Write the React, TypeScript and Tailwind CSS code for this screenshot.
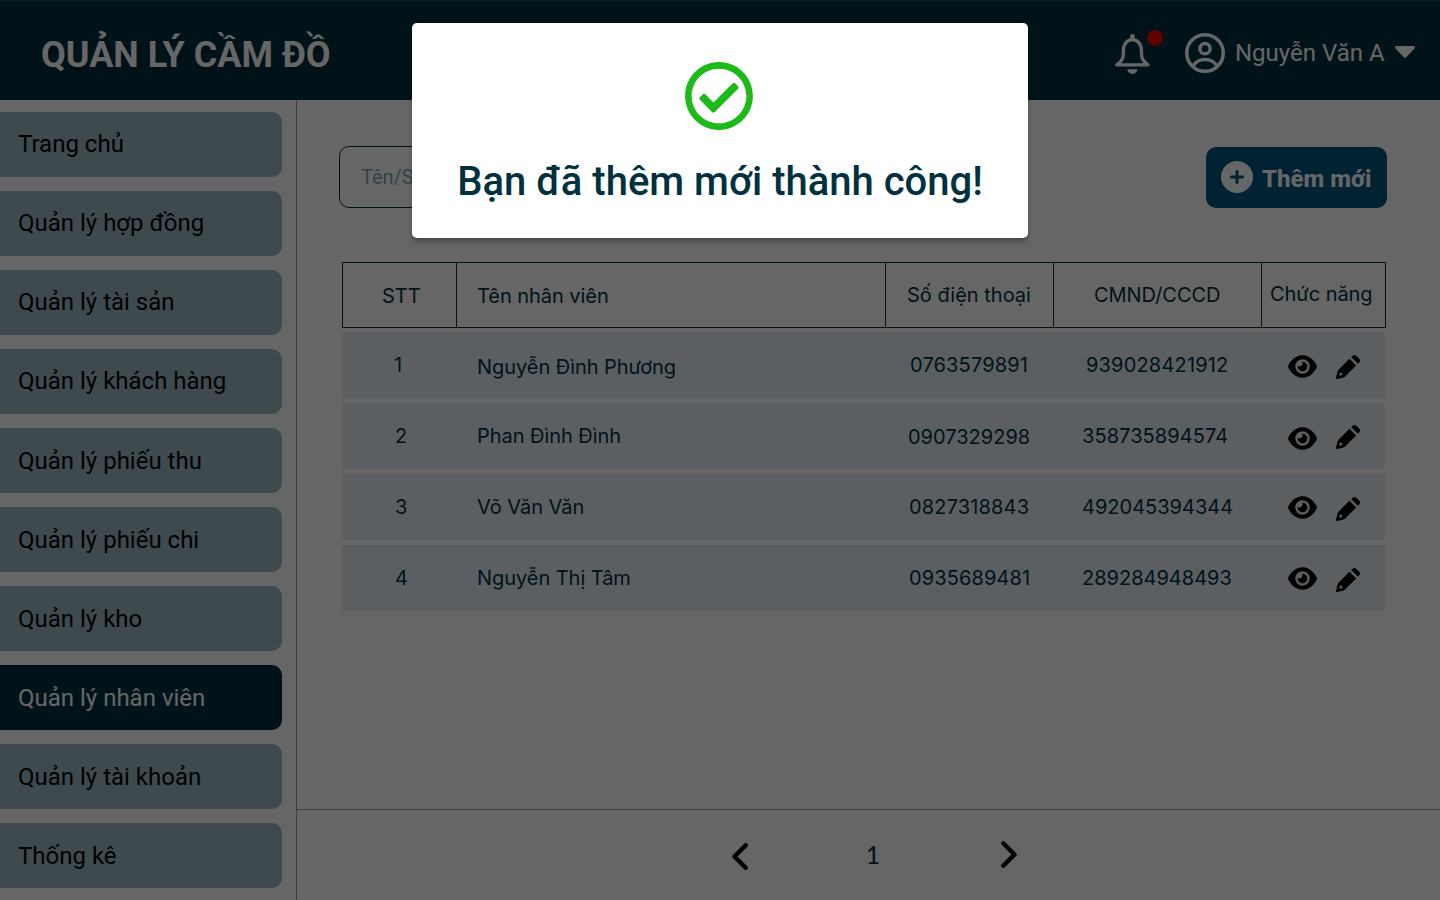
import { FaEye, FaCirclePlus } from 'react-icons/fa6';
import { FaRegCheckCircle } from 'react-icons/fa';

const menu = [
  { label: 'Trang chủ', pad: 'pb-[2px]' },
  { label: 'Quản lý hợp đồng', pad: 'pb-[2px]' },
  { label: 'Quản lý tài sản', pad: 'pb-[2px]' },
  { label: 'Quản lý khách hàng', pad: 'pb-[2px]' },
  { label: 'Quản lý phiếu thu', pad: '' },
  { label: 'Quản lý phiếu chi', pad: '' },
  { label: 'Quản lý kho', pad: '' },
  { label: 'Quản lý nhân viên', pad: '' },
  { label: 'Quản lý tài khoản', pad: '' },
  { label: 'Thống kê', pad: '' },
];
const active = 'Quản lý nhân viên';

const staff = [
  { no: '1', name: 'Nguyễn Đình Phương', phone: '0763579891', id: '939028421912', noPad: 'pl-[52px]', namePad: 'pt-[4px]', phonePad: 'pl-[24px] tracking-[0.15px]', idPad: 'pl-[32px] tracking-[0.18px]', eye: 'pt-[3px]', pen: 'pt-[3px]' },
  { no: '2', name: 'Phan Đình Đình', phone: '0907329298', id: '358735894574', noPad: 'pl-[53px]', namePad: '', phonePad: 'pl-[22px] pt-[2px]', idPad: 'pl-[28px] tracking-[0.08px]', eye: 'pt-[5px]', pen: 'pt-[2px]' },
  { no: '3', name: 'Võ Văn Văn', phone: '0827318843', id: '492045394344', noPad: 'pl-[53px]', namePad: '', phonePad: 'pl-[23px] tracking-[0.15px]', idPad: 'pl-[28px]', eye: '', pen: 'pt-[3px]' },
  { no: '4', name: 'Nguyễn Thị Tâm', phone: '0935689481', id: '289284948493', noPad: 'pl-[53px]', namePad: '', phonePad: 'pl-[23px] tracking-[0.1px]', idPad: 'pl-[28px]', eye: '', pen: 'pt-[3px]' },
];

function Bell() {
  return (
    <svg width="37" height="42" viewBox="0 0 37 42" fill="none">
      <path d="M2.800 31.800C7 29 9.300 26 9.300 21.500V18C9.300 11.300 13 6.700 18.400 6.700S27.500 11.300 27.500 18v3.500c0 4.500 2.300 7.500 6.500 10.300z" stroke="white" strokeWidth="3.300" strokeLinecap="round" strokeLinejoin="round" />
      <path d="M18.400 3.300v2" stroke="white" strokeWidth="4.600" strokeLinecap="round" />
      <path d="M13.400 36.200h10a5 4.800 0 0 1-10 0z" fill="white" />
    </svg>
  );
}

function Avatar() {
  return (
    <svg width="40" height="40" viewBox="0 0 40 40" fill="none" stroke="white" strokeWidth="3.500">
      <circle cx="20" cy="20" r="18.250" />
      <circle cx="20" cy="15.700" r="5.100" />
      <path d="M8.500 32.300C11 28.500 15 26.500 20 26.500s9 2 11.500 5.800" />
    </svg>
  );
}

function Pencil() {
  return (
    <svg width="24" height="24" viewBox="0 0 24 24" fill="currentColor">
      <path d="M15.200 2 16.400.9c1.200-1.100 2.800-1.100 4 0l2.700 2.700c1.200 1.200 1.200 2.800 0 4L22 8.800z" />
      <path fillRule="evenodd" d="M13.400 3.800 20.200 10.600 9.100 21.600c-.4.400-.9.700-1.500.8L1 24c-.7.100-1.100-.3-1-1l1.500-6.600c.1-.6.400-1.100.8-1.500zM4 17.300 3.300 20.800 6.700 20.100 5.900 18.300z" />
    </svg>
  );
}

function Chevron({ d }: { d: string }) {
  return (
    <svg width="16" height="27" viewBox="0 0 16 27" fill="none" stroke="black" strokeWidth="4.400" strokeLinecap="round" strokeLinejoin="round">
      <path d={d} />
    </svg>
  );
}

function Header() {
  return (
    <header className="flex h-[100px] shrink-0 items-center border-t border-[#00506a] bg-[#003140] pl-[41px] pr-[25px] text-white">
      <h1 className="grow pt-[9px] text-[36px] leading-[42px] font-bold [text-shadow:0_4px_4px_rgba(0,0,0,0.25)]">QUẢN LÝ CẦM ĐỒ</h1>
      <div className="relative mr-[34px] pt-[7px]">
        <Bell />
        <span className="absolute top-[4px] left-[33px] size-4 rounded-full bg-[#f00000]" />
      </div>
      <div className="flex items-center pt-[5px]">
        <Avatar />
        <span className="w-[170px] pl-[10px] text-[24px] leading-[28px] whitespace-nowrap">Nguyễn Văn A</span>
        <svg className="mb-[2px]" width="20" height="12" viewBox="0 0 20 12" fill="white">
          <path d="M1.500 0h17c1.300 0 2 1.500 1 2.500l-8 8.500c-.8.900-2.200.900-3 0l-8-8.500C-.5 1.500.2 0 1.500 0z" />
        </svg>
      </div>
    </header>
  );
}

export default function App() {
  return (
    <div className="relative flex h-[900px] w-[1440px] flex-col overflow-hidden bg-white font-[Roboto,sans-serif]">
      <Header />
      <div className="flex grow">
        <nav className="flex w-[297px] shrink-0 flex-col gap-[14px] border-r border-[#84a5b3] pt-[12px] text-[24px]">
          {menu.map((m) => (
            <a
              key={m.label}
              className={
                'flex h-[65px] w-[282px] shrink-0 items-center rounded-r-[10px] pl-[18px] ' +
                m.pad +
                (m.label === active ? ' bg-[#003140] text-white' : ' bg-[#9dbac6] text-black')
              }
            >
              {m.label}
            </a>
          ))}
        </nav>
        <main className="flex grow flex-col font-[Inter,sans-serif] text-[20px] text-[#003140]">
          <div className="flex h-[162px] items-start justify-between pt-[46px] pr-[53px] pl-[42px] font-[Roboto,sans-serif]">
            <div className="flex h-[62px] w-[460px] items-center rounded-[10px] border border-[#003140] pl-[21px] text-[#84a5b3]">Tên/SĐT</div>
            <button className="mt-px flex h-[61px] w-[181px] items-center rounded-[10px] bg-[#005580] pl-[15px] text-[24px] font-extrabold text-white">
              <FaCirclePlus className="mb-[2px]" size={32} />
              <span className="pt-[2px] pl-[9px] whitespace-nowrap">Thêm mới</span>
            </button>
          </div>
          <div className="ml-[45px] flex w-[1044px] flex-col">
            <div className="grid h-[66px] grid-cols-[114px_429px_168px_208px_124px] divide-x divide-[#003140] border border-[#003140] whitespace-nowrap">
              <div className="flex items-center pt-[2px] pl-[39px]">STT</div>
              <div className="flex items-center pt-[2px] pl-[20px] tracking-[-0.05px]">Tên nhân viên</div>
              <div className="flex items-center pl-[21px]">Số điện thoại</div>
              <div className="flex items-center pl-[40px] tracking-[-0.05px]">CMND/CCCD</div>
              <div className="flex items-center pb-[2px] pl-[8px] tracking-[-0.05px]">Chức năng</div>
            </div>
            <div className="mt-[4px] flex w-[1043px] flex-col gap-[5px]">
              {staff.map((s) => (
                <div key={s.no} className="grid h-[66px] grid-cols-[135px_409px_168px_208px_123px] bg-[#e6eef3]">
                  <div className={'flex items-center ' + s.noPad}>{s.no}</div>
                  <div className={'flex items-center tracking-[-0.05px] ' + s.namePad}>{s.name}</div>
                  <div className={'flex items-center ' + s.phonePad}>{s.phone}</div>
                  <div className={'flex items-center ' + s.idPad}>{s.id}</div>
                  <div className="flex gap-[19px] pl-[26px] text-black">
                    <span className={'flex items-center ' + s.eye}><FaEye size={29} /></span>
                    <span className={'flex items-center ' + s.pen}><Pencil /></span>
                  </div>
                </div>
              ))}
            </div>
          </div>
          <footer className="mt-auto flex h-[91px] items-center border-t border-[#84a5b3] pr-[423px] pl-[435px]">
            <div className="pt-[3px]"><Chevron d="M13.700 2.300 2.500 13.500 13.700 24.700" /></div>
            <span className="grow pr-[3px] text-center font-[Lato,sans-serif] text-[24px] font-medium">1</span>
            <div className="pb-px"><Chevron d="M2.300 2.300 13.500 13.500 2.300 24.700" /></div>
          </footer>
        </main>
      </div>
      <div className="absolute inset-0 flex items-start justify-center bg-black/60 pt-[23px]">
        <div className="flex h-[215px] w-[616px] flex-col items-center rounded-[5px] bg-white pt-[37.500px] shadow-[0_4px_4px_rgba(0,0,0,0.25)]">
          <FaRegCheckCircle className="mr-[2px] text-[#1dbb1a]" size={70} />
          <p className="mt-[27.500px] text-[40px] leading-[48px] font-medium whitespace-nowrap text-[#003140]">Bạn đã thêm mới thành công!</p>
        </div>
      </div>
    </div>
  );
}
